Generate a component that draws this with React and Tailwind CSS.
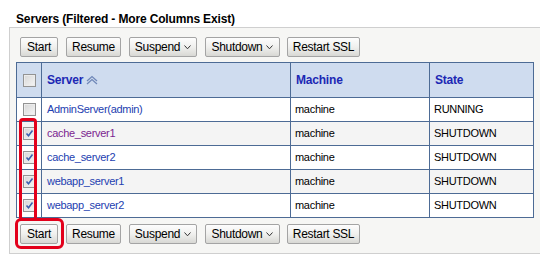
import { useState } from 'react'

const rows = [
  { name: 'AdminServer(admin)', state: 'RUNNING', checked: false, visited: false },
  { name: 'cache_server1', state: 'SHUTDOWN', checked: true, visited: true },
  { name: 'cache_server2', state: 'SHUTDOWN', checked: true, visited: false },
  { name: 'webapp_server1', state: 'SHUTDOWN', checked: true, visited: false },
  { name: 'webapp_server2', state: 'SHUTDOWN', checked: true, visited: false },
]

function Btn({ children, menu, className = '' }) {
  return (
    <button className={`flex h-[20px] items-center justify-center gap-[4px] rounded-[2px] border border-[#a4a4a4] bg-gradient-to-b from-[#fdfdfd] via-[#f0f0ee] to-[#d8d8d4] text-[12px] leading-none tracking-[-0.3px] text-black ${className}`}>
      {children}
      {menu ? (
        <svg width="7" height="5" viewBox="0 0 7 5" className="mt-[1px]">
          <path d="M0.5 0.5 L3.5 3.8 L6.5 0.5" fill="none" stroke="#333" strokeWidth="1" />
        </svg>
      ) : null}
    </button>
  )
}

function Toolbar() {
  return (
    <div className="flex items-center gap-[8px] pl-[4px]">
      <Btn className="w-[38px]">Start</Btn>
      <Btn className="w-[55px]">Resume</Btn>
      <Btn menu className="w-[68px]">Suspend</Btn>
      <Btn menu className="w-[75px]">Shutdown</Btn>
      <Btn className="-ml-[1px] w-[73px]">Restart SSL</Btn>
    </div>
  )
}

function Check({ checked }) {
  return (
    <span className="flex h-[13px] w-[13px] items-center justify-center border border-[#939393] bg-gradient-to-br from-[#d6d6d6] to-[#f6f6f6] shadow-[inset_0_0_0_1px_#ececec]">
      {checked ? (
        <svg width="9" height="9" viewBox="0 0 9 9">
          <path d="M1.5 4.5 L3.5 6.8 L7.5 1.5" fill="none" stroke="#3b5fae" strokeWidth="1.6" />
        </svg>
      ) : null}
    </span>
  )
}

export default function App() {
  const [items] = useState(rows)

  return (
    <div className="h-[260px] w-[540px] overflow-hidden bg-white" style={{ fontFamily: '"Liberation Sans", Arial, sans-serif' }}>
      <div className="pl-[16px] pt-[10px] text-[12px] font-bold leading-[18px] tracking-[-0.15px] text-black">
        Servers (Filtered - More Columns Exist)
      </div>
      <div className="relative ml-[9px] mt-[-1px] h-[227px] border-b border-l border-t border-[#cfcfcf] bg-[#f6f6f4] pl-[6px] pt-[9px]">
        <Toolbar />
        <table className="mt-[5px] w-[517px] table-fixed border-collapse text-[11px] tracking-[-0.3px]">
          <colgroup>
            <col className="w-[25px]" />
            <col className="w-[249px]" />
            <col className="w-[139px]" />
            <col className="w-[104px]" />
          </colgroup>
          <thead>
            <tr className="h-[35px] bg-[#cfdcef]">
              <th className="border border-[#4d6b95] align-middle">
                <div className="flex justify-center"><Check /></div>
              </th>
              <th className="border border-[#4d6b95] pl-[5px] text-left text-[12px] font-bold tracking-[-0.2px] text-[#1c28b4]">
                <span className="flex items-center gap-[3px]">
                  Server
                  <svg width="12" height="10" viewBox="0 0 12 10">
                    <path d="M1 6 L6 1.5 L11 6" fill="none" stroke="#7088b8" strokeWidth="1.3" />
                    <path d="M1 9 L6 4.5 L11 9" fill="none" stroke="#7088b8" strokeWidth="1.3" />
                  </svg>
                </span>
              </th>
              <th className="border border-[#4d6b95] pl-[5px] text-left text-[12px] font-bold tracking-[-0.2px] text-[#1c28b4]">Machine</th>
              <th className="border border-[#4d6b95] pl-[5px] text-left text-[12px] font-bold tracking-[-0.2px] text-[#1c28b4]">State</th>
            </tr>
          </thead>
          <tbody>
            {items.map((r, i) => (
              <tr key={r.name} className={`h-[24px] ${i % 2 ? 'bg-[#f4f4f4]' : 'bg-white'}`}>
                <td className="border border-[#4d6b95]">
                  <div className="flex justify-center"><Check checked={r.checked} /></div>
                </td>
                <td className={`border border-[#4d6b95] pl-[5px] ${r.visited ? 'text-[#7b2590]' : 'text-[#2340b0]'}`}>{r.name}</td>
                <td className="border border-[#4d6b95] pl-[4px] text-black">machine</td>
                <td className="border border-[#4d6b95] pl-[4px] text-black">{r.state}</td>
              </tr>
            ))}
          </tbody>
        </table>
        <div className="mt-[6px]">
          <Toolbar />
        </div>
        <div className="pointer-events-none absolute left-[9px] top-[90px] h-[103px] w-[18px] rounded-[4px] border-[3px] border-[#e3001b]" />
        <div className="pointer-events-none absolute left-[5px] top-[190px] h-[31px] w-[49px] rounded-[6px] border-[3px] border-[#e3001b]" />
      </div>
    </div>
  )
}
